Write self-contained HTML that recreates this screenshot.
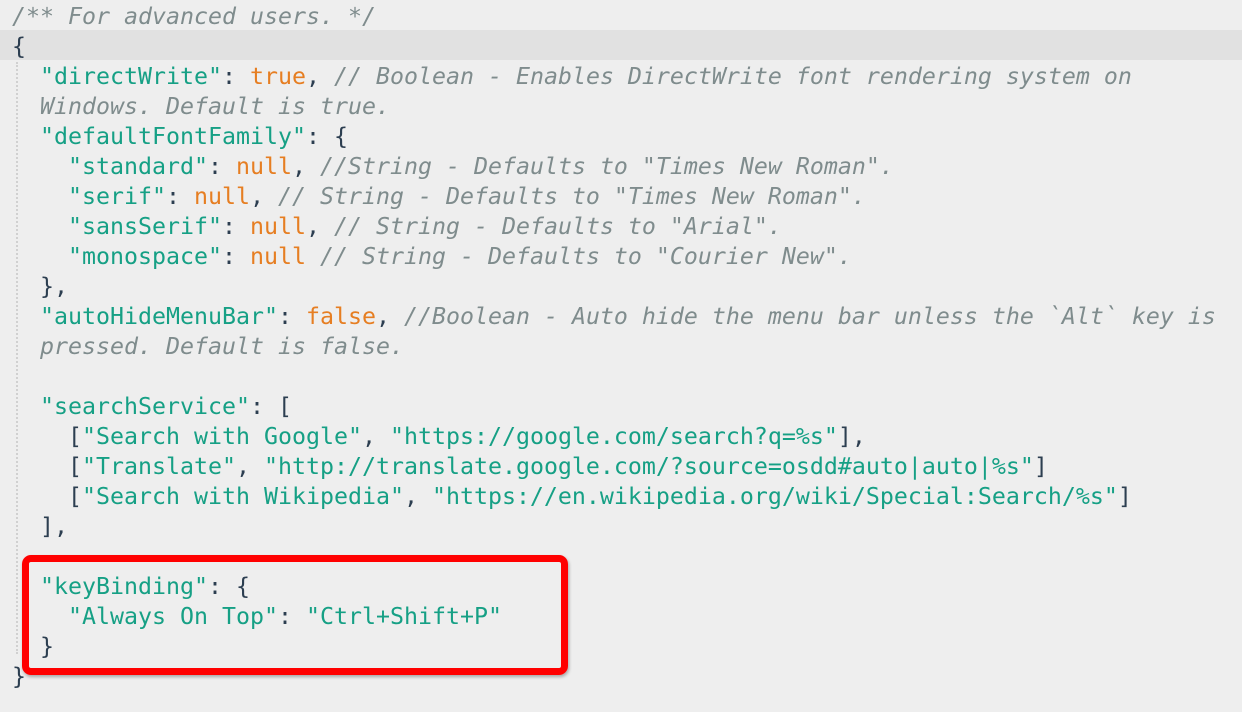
<!DOCTYPE html>
<html><head><meta charset="utf-8"><style>
html,body{margin:0;padding:0;background:#eeeeee;width:1242px;height:712px;overflow:hidden}
.code{position:absolute;left:12px;top:2px;font-family:"DejaVu Sans Mono","Liberation Mono",monospace;font-size:23.25px;line-height:30px;color:#2c3e50;white-space:pre}
.hl{position:absolute;left:0;top:30px;width:1242px;height:30px;background:#e1e1e1}
.s{color:#16a085}.k{color:#e67e22}.c{color:#7f8c8d;font-style:italic}
.guide{position:absolute;left:16px;top:62px;height:592px;border-left:2px dotted #d0d0d0}
.box{position:absolute;left:22px;top:555px;width:532px;height:106px;border:7px solid #ff0000;border-radius:9px;box-shadow:1px 2px 3px rgba(0,0,0,.3)}
</style></head><body>
<div class="hl"></div>
<div class="guide"></div>
<div class="code"><span class="c">/** For advanced users. */</span>
{
  <span class="s">"directWrite"</span>: <span class="k">true</span>, <span class="c">// Boolean - Enables DirectWrite font rendering system on</span>
  <span class="c">Windows. Default is true.</span>
  <span class="s">"defaultFontFamily"</span>: {
    <span class="s">"standard"</span>: <span class="k">null</span>, <span class="c">//String - Defaults to "Times New Roman".</span>
    <span class="s">"serif"</span>: <span class="k">null</span>, <span class="c">// String - Defaults to "Times New Roman".</span>
    <span class="s">"sansSerif"</span>: <span class="k">null</span>, <span class="c">// String - Defaults to "Arial".</span>
    <span class="s">"monospace"</span>: <span class="k">null</span> <span class="c">// String - Defaults to "Courier New".</span>
  },
  <span class="s">"autoHideMenuBar"</span>: <span class="k">false</span>, <span class="c">//Boolean - Auto hide the menu bar unless the `Alt` key is</span>
  <span class="c">pressed. Default is false.</span>

  <span class="s">"searchService"</span>: [
    [<span class="s">"Search with Google"</span>, <span class="s">"https://google.com/search?q=%s"</span>],
    [<span class="s">"Translate"</span>, <span class="s">"http://translate.google.com/?source=osdd#auto|auto|%s"</span>]
    [<span class="s">"Search with Wikipedia"</span>, <span class="s">"https://en.wikipedia.org/wiki/Special:Search/%s"</span>]
  ],

  <span class="s">"keyBinding"</span>: {
    <span class="s">"Always On Top"</span>: <span class="s">"Ctrl+Shift+P"</span>
  }
}</div>
<div class="box"></div>
</body></html>
